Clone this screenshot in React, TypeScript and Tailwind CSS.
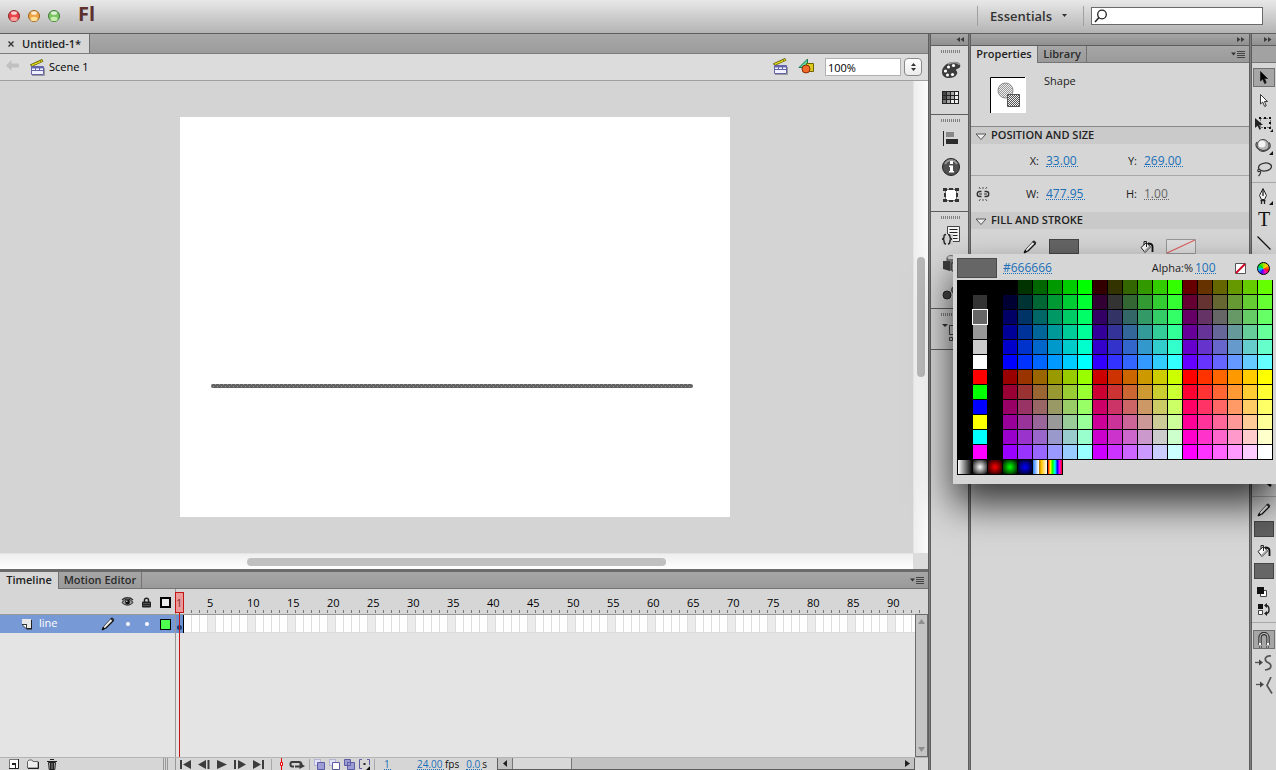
import { useState } from "react";
import type { ReactNode } from "react";

const HEX = ["00", "33", "66", "99", "CC", "FF"];
const LEFT_COLUMN = [
    "#000000",
    "#333333",
    "#666666",
    "#999999",
    "#CCCCCC",
    "#FFFFFF",
    "#FF0000",
    "#00FF00",
    "#0000FF",
    "#FFFF00",
    "#00FFFF",
    "#FF00FF",
];

// 12 rows x 21 columns: black, the basic column, black, then the web-safe cube
const SWATCHES = LEFT_COLUMN.flatMap((basic, row) => {
    const cube = Array.from({ length: 18 }, (_, col) => {
        const red = HEX[Math.floor(col / 6) + (row > 5 ? 3 : 0)];
        return `#${red}${HEX[col % 6]}${HEX[row % 6]}`;
    });
    return ["#000000", basic, "#000000", ...cube];
});

const GRADIENTS = [
    "linear-gradient(90deg,#fff,#000)",
    "radial-gradient(circle,#fff,#000)",
    "radial-gradient(circle,#f00,#000)",
    "radial-gradient(circle,#0f0,#000)",
    "radial-gradient(circle,#00f,#000)",
    "linear-gradient(90deg,#2a7fff,#fff 40%,#a86a00 41%,#ffc400 60%,#fff)",
    "linear-gradient(90deg,#f00,#ff0,#0f0,#0ff,#00f,#f0f,#f00)",
];

const FRAMES = Array.from({ length: 93 }, (_, i) => i + 1);
const LABELS = Array.from({ length: 18 }, (_, i) => (i + 1) * 5);

type IconProps = { w: number; h: number; children: ReactNode; className?: string };

const Icon = ({ w, h, children, className }: IconProps) => (
    <svg
        width={w}
        height={h}
        viewBox={`0 0 ${w} ${h}`}
        fill="none"
        aria-hidden="true"
        className={`shrink-0 ${className ?? ""}`}
    >
        {children}
    </svg>
);

const Clapper = () => (
    <Icon w={15} h={17}>
        <path d="M0 5.500 12 0l1.500 2.500L1.500 8z" fill="#5c5800" />
        <path d="M1.200 5.800 12 1l.7 1.300L2 7z" fill="#e8e020" />
        <path d="M4 4.700l1 1M7 3.400l1 1M10 2l1 1" stroke="#8a8400" />
        <path d="M1.500 7.500h12v8h-12z" fill="#f0f0ff" stroke="#6464a8" />
        <path d="M1.500 8.500h12M1.500 11.500h12" stroke="#6464a8" />
        <path d="M2 9.500h11" stroke="#b4b4e0" />
        <path d="M5.500 8v4M9.500 8v4" stroke="#6464a8" />
        <path d="M2 16.500h12.500V9" stroke="#888" strokeWidth=".8" />
    </Icon>
);

const Pencil = () => (
    <Icon w={14} h={14}>
        <path d="M1.500 12.500 3 9l7-7.500 2.500 2L5 11z" fill="#eee" stroke="#333" strokeWidth=".8" />
        <path d="M1 13l1.200-2.800 1.700 1.500z" fill="#111" stroke="#111" />
        <path d="M4.500 11.500 12.500 3.500" stroke="#111" strokeWidth="1.300" />
        <path d="M9.500 1.800 11 .8l2 1.700-1 1.500z" fill="#333" stroke="#111" strokeWidth=".6" />
    </Icon>
);

const Bucket = () => (
    <Icon w={14} h={14}>
        <path d="M1 7.500 6.500 2.500 10.500 7 5 12.500z" fill="#fafafa" stroke="#222" />
        <path d="M4.500 11.500 9.500 6.500" stroke="#aaa" strokeWidth="1.500" />
        <path d="M4 5V1.500h2.500V7" stroke="#222" />
        <path d="M8 3.500c3 0 4.500 1.500 4.500 3v5.500" stroke="#111" strokeWidth="1.800" />
    </Icon>
);

const PanelMenu = () => (
    <Icon w={14} h={9}>
        <path d="M0 2.500h5L2.500 5.500z" fill="#333" />
        <path d="M6 1.500h8M6 3.500h8M6 5.500h8M6 7.500h8" stroke="#444" />
    </Icon>
);

const DoubleArrow = ({ left }: { left?: boolean }) => (
    <Icon w={8} h={7} className={left ? "rotate-180" : ""}>
        <path d="M0 1l3.500 2.500L0 6zM4 1l3.500 2.500L4 6z" fill="#3a3a3a" />
    </Icon>
);

const Grip = () => (
    <Icon w={19} h={3} className="mx-auto">
        <path d="M.5 0v3M2.500 0v3M4.500 0v3M6.500 0v3M8.500 0v3M10.500 0v3M12.500 0v3M14.500 0v3M16.500 0v3M18.500 0v3" stroke="#808080" />
    </Icon>
);

const TrafficLight = ({ label, rim, mid, glow }: { label: string; rim: string; mid: string; glow: string }) => (
    <button type="button" aria-label={label} className="size-3">
        <Icon w={12} h={12}>
            <circle cx="6" cy="6" r="5.500" fill={mid} stroke={rim} />
            <ellipse cx="6" cy="9" rx="3.500" ry="2.200" fill={glow} opacity=".85" />
            <ellipse cx="6" cy="3" rx="3" ry="1.800" fill="#fff" opacity=".75" />
        </Icon>
    </button>
);

const HotText = ({
    id,
    label,
    value,
    className,
}: {
    id: string;
    label?: string;
    value: string;
    className: string;
}) => (
    <input
        id={id}
        aria-label={label}
        defaultValue={value}
        className={`h-3 border-b border-dotted bg-transparent p-0 leading-3 outline-none ${className}`}
    />
);

const Header = () => (
    <header className="flex h-[34px] shrink-0 items-center border-b border-[#5e5e5e] bg-linear-to-b from-[#e8e8e8] to-[#b4b4b4] pb-px pl-2 pr-[13px]">
        <div className="flex gap-2">
            <TrafficLight label="Close" rim="#8c2a2a" mid="#e8434a" glow="#ffb0a8" />
            <TrafficLight label="Minimize" rim="#9a6420" mid="#f0a345" glow="#ffe9a0" />
            <TrafficLight label="Zoom" rim="#417a35" mid="#7cc565" glow="#d0f5b8" />
        </div>
        <h1 className="ml-[18px] pb-1 text-[20px] font-bold leading-6 text-[#5c302d]">Fl</h1>
        <div className="ml-auto flex h-5 items-center border-x border-[#a0a0a0] px-3">
            <button type="button" className="flex items-center gap-[10px] pb-px text-[13px] font-semibold leading-4 text-[#333]">
                Essentials
                <Icon w={5} h={3} className="mr-1">
                    <path d="M0 0h5L2.500 3z" fill="#333" />
                </Icon>
            </button>
        </div>
        <label className="ml-[7px] flex h-[18px] w-[172px] items-center border border-[#6a6a6a] bg-white pl-[2px]">
            <Icon w={13} h={14}>
                <circle cx="8" cy="5.500" r="4.300" stroke="#222" strokeWidth="1.300" />
                <path d="M5 8.500 1 13" stroke="#222" strokeWidth="1.500" />
            </Icon>
            <input type="search" aria-label="Search" className="h-4 w-full min-w-0 outline-none" />
        </label>
    </header>
);

const DocumentArea = () => (
    <section className="flex min-h-0 flex-1 flex-col">
        <div className="flex h-5 shrink-0 border-b border-[#7c7c7c] bg-linear-to-b from-[#a9a9a9] to-[#9b9b9b]">
            <div className="flex w-[90px] items-center gap-2 border-r border-[#6e6e6e] bg-[#d6d6d6] pl-2 font-semibold text-[#222]">
                <button type="button" aria-label="Close document" className="shrink-0">
                    <Icon w={6} h={6}>
                        <path d="M.5 .5l5 5M5.500 .5l-5 5" stroke="#333" strokeWidth="1.400" />
                    </Icon>
                </button>
                <span>Untitled-1*</span>
            </div>
        </div>
        <div className="flex h-[27px] shrink-0 items-center border-b border-[#a0a0a0] bg-[#dcdcdc] pl-[6px] pr-[6px]">
            <button type="button" aria-label="Back">
                <Icon w={13} h={11} className="-mt-1">
                    <path d="M0 5.500 5.500 0v3.500H13v4H5.500V11z" fill="#c0c0c0" />
                </Icon>
            </button>
            <div className="ml-[11px] flex items-center gap-1 text-black">
                <Clapper />
                <span>Scene 1</span>
            </div>
            <div className="ml-auto flex items-center">
                <button type="button" aria-label="Edit scene" className="pb-[2px]">
                    <Clapper />
                </button>
                <button type="button" aria-label="Edit symbols" className="ml-[10px] pb-[3px]">
                    <Icon w={17} h={16}>
                        <path d="M1 9.500 9.500 1v8.500z" fill="#5fd6a0" stroke="#187a52" />
                        <path d="M8.500 5.500h7v8h-7z" fill="#dccb1c" stroke="#6e6500" />
                        <circle cx="8" cy="11" r="4" fill="#f26a2a" stroke="#8c2c08" />
                    </Icon>
                </button>
                <input
                    aria-label="Zoom level"
                    defaultValue="100%"
                    className="ml-[10px] h-[18px] w-[76px] border border-[#b0b0b0] bg-white pl-[2px] text-black outline-none"
                />
                <button
                    type="button"
                    aria-label="Zoom presets"
                    className="ml-[3px] flex h-[18px] w-[18px] items-center justify-center rounded border border-[#8a8a8a] bg-linear-to-b from-white to-[#ececec]"
                >
                    <Icon w={5} h={8}>
                        <path d="M0 3h5L2.500 0zM0 5h5L2.500 8z" fill="#333" />
                    </Icon>
                </button>
            </div>
        </div>
        <div className="flex min-h-0 flex-1">
            <div className="flex min-w-0 flex-1 items-center justify-center bg-[#d4d4d4] pr-[3px]">
                <div className="relative h-[400px] w-[550px] shrink-0 bg-white">
                    <svg width="482" height="4" className="absolute left-[31px] top-[267px]" role="img" aria-label="Line shape">
                        <defs>
                            <pattern id="dots" width="4" height="4" patternUnits="userSpaceOnUse">
                                <path d="M0 0h1v1H0zM2 2h1v1H2z" fill="#999" />
                            </pattern>
                        </defs>
                        <rect width="482" height="4" rx="2" fill="#626262" />
                        <rect width="482" height="4" rx="2" fill="url(#dots)" />
                    </svg>
                </div>
            </div>
            <div className="flex w-[15px] shrink-0 flex-col items-center justify-center border-l border-[#e4e4e4] bg-linear-to-r from-[#eee] to-[#fbfbfb]">
                <div className="h-[120px] w-2 rounded-full bg-[#b9b9b9]" />
            </div>
        </div>
        <div className="flex h-4 shrink-0">
            <div className="flex flex-1 items-center border-t border-[#e4e4e4] bg-linear-to-b from-[#eee] to-white pt-px">
                <div className="ml-[27%] h-2 w-[46%] rounded-full bg-[#c0c0c0]" />
            </div>
            <div className="w-[15px] bg-[#dcdcdc]" />
        </div>
    </section>
);

const Ruler = () => (
    <div className="flex h-[26px] shrink-0 border-b border-[#989898] bg-[#d6d6d6]">
        <div className="flex w-[175px] shrink-0 items-center justify-end pt-px">
            <button type="button" aria-label="Show or hide all layers" className="flex w-[19px] justify-center">
                <Icon w={13} h={10}>
                    <path d="M1 5.500c3-4.500 8-4.500 11 0-3 3.500-8 3.500-11 0z" fill="#999" stroke="#222" />
                    <circle cx="6.500" cy="5" r="2.400" fill="#111" />
                    <path d="M1 3c3-3 8-3 11 0" stroke="#333" strokeWidth="1.300" />
                    <circle cx="5.800" cy="4.200" r=".7" fill="#fff" />
                </Icon>
            </button>
            <button type="button" aria-label="Lock or unlock all layers" className="flex w-[19px] justify-center">
                <Icon w={9} h={11}>
                    <path d="M2.500 5V3c0-2.500 4-2.500 4 0v2" stroke="#222" strokeWidth="1.500" />
                    <rect y="4.500" width="9" height="6" rx="1" fill="#222" />
                    <path d="M1 6.500h7M1 8.500h7" stroke="#666" strokeWidth=".7" />
                </Icon>
            </button>
            <button type="button" aria-label="Show all layers as outlines" className="flex w-[19px] justify-center">
                <span className="size-[11px] border-2 border-black bg-[#eee]" />
            </button>
        </div>
        <div className="flex min-w-0 flex-1 flex-col justify-end overflow-hidden border-l border-[#989898] pb-px text-black">
            <div className="flex leading-[14px]">
                <span className="w-[31px] shrink-0">1</span>
                {LABELS.map((n) => (
                    <span key={n} className="w-10 shrink-0">
                        {n}
                    </span>
                ))}
            </div>
            <div className="flex">
                {FRAMES.map((n) => (
                    <span key={n} className="h-[3px] w-2 shrink-0 border-r border-[#777]" />
                ))}
            </div>
        </div>
    </div>
);

const LayerRow = () => (
    <div className="flex h-[18px] shrink-0">
        <div className="flex w-[175px] shrink-0 items-center bg-[#7799d6] pl-[22px] text-white">
            <Icon w={11} h={11}>
                <path d="M0 1h10v9.500H4.500V6H0z" fill="#222" />
                <path d="M0 0h9v9H5V5H0z" fill="#e8e8e8" />
                <path d="M0 5.500h4.500V10z" fill="#fff" stroke="#222" strokeWidth=".8" />
            </Icon>
            <span className="ml-[6px] pb-[2px]">line</span>
            <div className="ml-auto flex items-center">
                <Pencil />
                <button type="button" aria-label="Layer visible" className="ml-[3px] flex w-[19px] justify-center">
                    <span className="size-1 rounded-full bg-white" />
                </button>
                <button type="button" aria-label="Layer unlocked" className="flex w-[19px] justify-center">
                    <span className="size-1 rounded-full bg-white" />
                </button>
                <button type="button" aria-label="Layer outline colour" className="flex w-[19px] justify-center">
                    <span className="size-[11px] border border-black bg-[#4fff4f]" />
                </button>
            </div>
        </div>
        <div className="flex min-w-0 flex-1 overflow-hidden border-l border-[#989898]">
            {FRAMES.map((n) =>
                n === 1 ? (
                    <span key={n} className="flex w-2 shrink-0 items-end justify-center border-r border-black bg-[#6d92d4] pb-[3px]">
                        <span className="size-[5px] rounded-full bg-[#173d7a]" />
                    </span>
                ) : (
                    <span
                        key={n}
                        className={`w-2 shrink-0 border-b border-r border-[#dcdcdc] ${n % 5 === 0 ? "bg-[#ebebeb]" : "bg-white"}`}
                    />
                ),
            )}
        </div>
    </div>
);

const Separator = () => <span className="h-[11px] w-px shrink-0 bg-[#a8a8a8]" />;

const TimelineFooter = () => (
    <div className="flex h-[13px] shrink-0 items-center border-t border-[#b4b4b4] bg-[#d6d6d6]">
        <div className="flex w-[175px] shrink-0 items-center gap-2 pl-[9px]">
            <button type="button" aria-label="New layer">
                <Icon w={10} h={10}>
                    <path d="M.5 .5h9v9h-9z" fill="#fff" stroke="#777" />
                    <path d="M9.500 0v9.500H0" stroke="#222" />
                    <path d="M3 4h4v5H6V6H3z" fill="#222" />
                </Icon>
            </button>
            <button type="button" aria-label="New folder">
                <Icon w={12} h={10}>
                    <path d="M.5 2.500 2 1h3l1 1.500h5v6.500H.5z" fill="#eee" stroke="#666" />
                    <path d="M11.500 3v6.500H1" stroke="#222" />
                </Icon>
            </button>
            <button type="button" aria-label="Delete layer">
                <Icon w={10} h={12}>
                    <path d="M1.500 4.500h7l-.7 7H2.200z" fill="#ccc" stroke="#222" />
                    <path d="M0 3.500h10M3 1.500h4M3.500 5v6M5 5v6M6.500 5v6" stroke="#222" strokeWidth="1.200" />
                </Icon>
            </button>
            <Icon w={6} h={12} className="ml-auto mr-[6px]">
                <path d="M.5 0v12M2.500 0v12M4.500 0v12" stroke="#999" />
            </Icon>
        </div>
        <div className="flex h-full shrink-0 items-center border-l border-[#989898] pl-1">
            <div className="flex items-center gap-[7px]">
                <button type="button" aria-label="First frame">
                    <Icon w={11} h={9}>
                        <path d="M0 0h2v9H0zM11 0v9L3 4.500z" fill="#3c3c3c" />
                    </Icon>
                </button>
                <button type="button" aria-label="Step back">
                    <Icon w={12} h={9}>
                        <path d="M8 0v9L0 4.500zM9.500 0h2v9h-2z" fill="#3c3c3c" />
                    </Icon>
                </button>
                <button type="button" aria-label="Play">
                    <Icon w={10} h={9}>
                        <path d="M0 0v9l10-4.500z" fill="#3c3c3c" />
                    </Icon>
                </button>
                <button type="button" aria-label="Step forward">
                    <Icon w={12} h={9}>
                        <path d="M0 0h2v9H0zM4 0v9l8-4.500z" fill="#3c3c3c" />
                    </Icon>
                </button>
                <button type="button" aria-label="Last frame">
                    <Icon w={11} h={9}>
                        <path d="M0 0v9l8-4.500zM9 0h2v9H9z" fill="#3c3c3c" />
                    </Icon>
                </button>
                <Separator />
            </div>
            <button type="button" aria-label="Center frame" className="ml-2">
                <Icon w={3} h={12}>
                    <path d="M1.500 0v12" stroke="#e00" />
                    <path d="M.5 4.500h2v3h-2z" fill="#fff" stroke="#e00" />
                </Icon>
            </button>
            <button type="button" aria-label="Loop" className="ml-[6px]">
                <Icon w={16} h={9}>
                    <path d="M5 6.500H3C1 6.500 1 2 3 2h7c2 0 2.500 1 2.500 3" stroke="#3c3c3c" strokeWidth="2" />
                    <path d="M6 6.500h5" stroke="#3c3c3c" strokeWidth="2" />
                    <path d="M10.500 3v6l5.500-3z" fill="#3c3c3c" />
                </Icon>
            </button>
            <span className="ml-1 flex items-center gap-1">
                <Separator />
                <button type="button" aria-label="Onion skin">
                    <Icon w={11} h={11}>
                        <path d="M.5 .5h6v6h-6z" fill="#e4e4f8" stroke="#8c8cc8" strokeDasharray="1 1" />
                        <path d="M3.500 3.500h7v7h-7z" fill="#9c9cd4" stroke="#5c5ca4" />
                    </Icon>
                </button>
                <button type="button" aria-label="Onion skin outlines">
                    <Icon w={11} h={11}>
                        <path d="M.5 .5h6v6h-6z" fill="#e4e4f8" stroke="#8c8cc8" strokeDasharray="1 1" />
                        <path d="M3.500 3.500h7v7h-7z" fill="#fff" stroke="#5c5ca4" />
                    </Icon>
                </button>
                <button type="button" aria-label="Edit multiple frames">
                    <Icon w={11} h={11}>
                        <path d="M.5 .5h6v6h-6zM3.500 3.500h7v7h-7z" fill="#9c9cd4" stroke="#5c5ca4" />
                    </Icon>
                </button>
                <button type="button" aria-label="Modify markers">
                    <Icon w={11} h={11}>
                        <path d="M3 .5H.5v9H3M8 .5h2.500V6" stroke="#5c5ca4" />
                        <path d="M4.500 4h2v2h-2z" fill="#222" />
                        <path d="M11 7v4H7z" fill="#111" />
                    </Icon>
                </button>
                <Separator />
            </span>
            <HotText id="frame" label="Frame" value="1" className="ml-[9px] w-[7px] border-[#1a6fb8] text-[10px] text-[#1a6fb8]" />
            <HotText id="fps" value="24.00" className="ml-[26px] w-[27px] border-[#1a6fb8] text-[10px] text-[#1a6fb8]" />
            <label htmlFor="fps" className="ml-px text-[10px] leading-3 text-[#111]">
                fps
            </label>
            <HotText id="elapsed" value="0.0" className="ml-[7px] w-4 border-[#1a6fb8] text-[10px] text-[#1a6fb8]" />
            <label htmlFor="elapsed" className="text-[10px] leading-3 text-[#111]">
                s
            </label>
        </div>
        <div className="ml-[10px] flex h-full min-w-0 flex-1 border border-t-0 border-[#5e5e5e] bg-[#c2c2c2]">
            <button type="button" aria-label="Scroll left" className="flex w-[15px] shrink-0 items-center justify-center border-r border-[#777]">
                <Icon w={4} h={7}>
                    <path d="M4 0v7L0 3.500z" fill="#222" />
                </Icon>
            </button>
            <div className="w-[59px] shrink-0 border-r border-[#777] bg-[#d8d8d8]" />
            <button type="button" aria-label="Scroll right" className="ml-auto mr-1 flex items-center">
                <Icon w={5} h={7}>
                    <path d="M0 0v7l5-3.500z" fill="#222" />
                </Icon>
            </button>
        </div>
        <div className="w-[13px] shrink-0" />
    </div>
);

const Timeline = () => (
    <section className="flex h-[201px] shrink-0 flex-col border-t-[3px] border-[#6b6b6b]">
        <div className="flex h-[17px] shrink-0 border-b border-[#747474] bg-linear-to-b from-[#a6a6a6] to-[#9a9a9a] font-semibold text-[#222]">
            <button type="button" className="-mb-px w-[59px] border-r border-[#747474] bg-[#d6d6d6] pb-[2px]">
                Timeline
            </button>
            <button type="button" className="w-[83px] border-r border-[#747474] pb-px text-[#2b2b2b]">
                Motion Editor
            </button>
            <button type="button" aria-label="Timeline panel menu" className="ml-auto mr-1">
                <PanelMenu />
            </button>
        </div>
        <div className="relative flex min-h-0 flex-1 flex-col">
            <Ruler />
            <div className="flex min-h-0 flex-1">
                <div className="flex min-w-0 flex-1 flex-col">
                    <LayerRow />
                    <div className="flex flex-1 bg-[#e4e4e4]">
                        <div className="w-[175px]" />
                        <div className="flex-1 border-l border-[#989898]" />
                    </div>
                </div>
                <div className="-mt-px flex w-[13px] shrink-0 flex-col items-center justify-between border border-[#6b6b6b] bg-[#c4c4c4] py-1">
                    <Icon w={7} h={5}>
                        <path d="M0 5h7L3.500 0z" fill="#8e8e8e" />
                    </Icon>
                    <Icon w={7} h={5}>
                        <path d="M0 0h7L3.500 5z" fill="#8e8e8e" />
                    </Icon>
                </div>
            </div>
            <div className="absolute bottom-0 left-[175px] top-[3px] flex w-[9px] flex-col items-center">
                <div className="h-[21px] w-full border border-[#c41414] bg-[#ff5a5a]/50" />
                <div className="w-px flex-1 bg-[#c41414]" />
            </div>
        </div>
        <TimelineFooter />
    </section>
);

const IconDock = () => (
    <aside className="flex w-[37px] shrink-0 flex-col">
        <div className="flex h-3 shrink-0 items-center justify-end border-b border-[#5e5e5e] bg-linear-to-b from-[#a6a6a6] to-[#909090] pr-1">
            <DoubleArrow left />
        </div>
        <div className="flex h-[69px] shrink-0 flex-col items-center border-b border-[#5e5e5e] pl-[2px] pt-1">
            <Grip />
            <button type="button" aria-label="Color" className="mt-2">
                <Icon w={20} h={18}>
                    <path d="M1 11C1 5 7 1 13 1c5 0 7 2 6 5-1 2-4 1.500-4 3 0 1 2 1.500 1 4-1.500 3-5 4-8 4-4 0-7-2-7-6z" fill="#3c3c3c" />
                    <path d="M7 3c5-2.500 10-2 11.500 1" stroke="#999" strokeWidth="1.500" />
                    <circle cx="4.500" cy="10" r="1.600" fill="#fff" />
                    <circle cx="7.500" cy="6" r="1.600" fill="#fff" />
                    <circle cx="12.500" cy="4.500" r="1.600" fill="#fff" />
                    <circle cx="6.500" cy="14" r="1.500" fill="#fff" />
                    <circle cx="11.500" cy="13.500" r="1.600" fill="#fff" />
                </Icon>
            </button>
            <button type="button" aria-label="Swatches" className="mt-3">
                <Icon w={17} h={13}>
                    <path d="M0 0h17v13H0z" fill="#222" />
                    <path d="M1 1h3v3H1zM1 5h3v3H1z" fill="#444" />
                    <path d="M5 1h3v3H5zM5 5h3v3H5zM1 9h3v3H1z" fill="#777" />
                    <path d="M9 1h3v3H9zM9 5h3v3H9zM5 9h3v3H5z" fill="#aaa" />
                    <path d="M13 1h3v3h-3zM13 5h3v3h-3zM9 9h3v3H9zM13 9h3v3h-3z" fill="#eee" />
                </Icon>
            </button>
        </div>
        <div className="flex h-[97px] shrink-0 flex-col items-center border-b border-[#5e5e5e] pl-[2px] pt-1">
            <Grip />
            <button type="button" aria-label="Align" className="mt-[9px]">
                <Icon w={15} h={15}>
                    <path d="M.5 0v15" stroke="#222" />
                    <path d="M3 1h8v5H3z" fill="#888" />
                    <path d="M3 8h12v5H3z" fill="#2c2c2c" />
                </Icon>
            </button>
            <button type="button" aria-label="Info" className="mt-3">
                <Icon w={18} h={18}>
                    <circle cx="9" cy="9" r="8.500" fill="#505050" stroke="#222" />
                    <path d="M3 6c3-5 9-5 12 0" stroke="#999" strokeWidth="2" />
                    <path d="M8 3h3v3H8zM7 7.500h4V13h1v1.500H7V13h1V9H7z" fill="#fff" />
                </Icon>
            </button>
            <button type="button" aria-label="Transform" className="mt-[11px]">
                <Icon w={16} h={16}>
                    <path d="M2.500 2.500h11v11h-11z" fill="#fff" stroke="#777" />
                    <path d="M0 1h4v3H0zM6 1h4v2H6zM12 1h4v3h-4zM1 6h2v4H1zM13 6h2v4h-2zM0 12h4v3H0zM6 13h4v2H6zM12 12h4v3h-4z" fill="#333" />
                </Icon>
            </button>
        </div>
        <div className="flex h-[97px] shrink-0 flex-col items-center border-b border-[#5e5e5e] pl-[2px] pt-1">
            <Grip />
            <button type="button" aria-label="Code snippets" className="mt-[7px]">
                <Icon w={20} h={19}>
                    <path d="M6.500 .5h12v15h-12z" fill="#f4f4f4" stroke="#444" />
                    <path d="M8.500 3.500h8M8.500 6.500h8M8.500 9.500h8M12 12.500h4.500" stroke="#222" />
                    <path d="M0 8h12v11H0z" fill="#d0d0d0" />
                    <path d="M5 8.500c-2 0-2 1-2 2.500 0 1.500-.5 2-2 2 1.500 0 2 .5 2 2 0 1.500 0 3 2 3M7 8.500c2 0 2 1 2 2.500 0 1.500.5 2 2 2-1.500 0-2 .5-2 2 0 1.500 0 3-2 3" stroke="#222" strokeWidth="1.400" />
                </Icon>
            </button>
            <button type="button" aria-label="Components" className="mt-[10px]">
                <Icon w={18} h={17}>
                    <path d="M5 3c0-3 8-3 8 0v5H5z" fill="#777" stroke="#555" />
                    <ellipse cx="9" cy="2.500" rx="3.500" ry="1.500" fill="#ccc" />
                    <path d="M1 6h7v10l-7-2z" fill="#3c3c3c" />
                    <path d="M8 8l4-2v8l-4 2z" fill="#666" />
                    <path d="M10 8h7v8h-7z" fill="#ddd" stroke="#333" />
                </Icon>
            </button>
            <button type="button" aria-label="Motion presets" className="mt-[13px]">
                <Icon w={18} h={15}>
                    <circle cx="5" cy="10" r="4" fill="#444" stroke="#222" />
                    <circle cx="13" cy="5" r="3.500" fill="#777" stroke="#444" />
                </Icon>
            </button>
        </div>
        <div className="flex h-[41px] shrink-0 flex-col items-center border-b border-[#5e5e5e] pl-[2px] pt-1">
            <Grip />
            <button type="button" aria-label="Project" className="mt-2">
                <Icon w={18} h={18}>
                    <path d="M0 0h6L3 3z" fill="#333" />
                    <path d="M7.500 1.500h9v9h-9zM7.500 13.500h3v3h-3zM13.500 13.500h3v3h-3z" stroke="#444" />
                </Icon>
            </button>
        </div>
    </aside>
);

const SectionTitle = ({ children }: { children: ReactNode }) => (
    <button type="button" className="flex h-[17px] w-full shrink-0 items-center gap-1 bg-[#cacaca] pl-1 text-left font-semibold text-[#222]">
        <Icon w={12} h={8} className="mt-[3px]">
            <path d="M1 1h10L6 6.500z" fill="#eee" stroke="#555" />
        </Icon>
        <h2 className="pb-[2px]">{children}</h2>
    </button>
);

const PropertiesPanel = () => (
    <aside className="flex w-[278px] shrink-0 flex-col">
        <div className="flex h-3 shrink-0 items-center justify-end border-b border-[#5e5e5e] bg-linear-to-b from-[#a6a6a6] to-[#909090] pr-1">
            <DoubleArrow />
        </div>
        <div className="flex h-[17px] shrink-0 border-b border-[#747474] bg-linear-to-b from-[#a6a6a6] to-[#9a9a9a] font-semibold text-[#222]">
            <button type="button" className="-mb-px w-[67px] border-r border-[#747474] bg-[#d6d6d6] pb-[2px]">
                Properties
            </button>
            <button type="button" className="w-[49px] border-r border-[#747474] pb-px text-[#2b2b2b]">
                Library
            </button>
            <button type="button" aria-label="Properties panel menu" className="ml-auto mr-1">
                <PanelMenu />
            </button>
        </div>
        <div className="flex h-16 shrink-0 gap-[18px] border-b border-[#888] pl-[19px] pt-[10px] text-[#1c1c1c]">
            <Icon w={36} h={40}>
                <defs>
                    <pattern id="check" width="2" height="2" patternUnits="userSpaceOnUse">
                        <path d="M0 0h1v1H0zM1 1h1v1H1z" fill="#555" />
                    </pattern>
                    <pattern id="check-light" width="2" height="2" patternUnits="userSpaceOnUse">
                        <path d="M0 0h1v1H0zM1 1h1v1H1z" fill="#999" />
                    </pattern>
                </defs>
                <path d="M0 4h36v36H0z" fill="#fff" />
                <path d="M.5 40V4.500H35" stroke="#000" />
                <circle cx="15.500" cy="17.500" r="7.500" fill="#eee" />
                <circle cx="15.500" cy="17.500" r="7.500" fill="url(#check-light)" stroke="#888" />
                <path d="M17.500 21.500h12v12h-12z" fill="#eee" />
                <path d="M17.500 21.500h12v12h-12z" fill="url(#check)" stroke="#555" />
            </Icon>
            <span className="h-4 leading-4">Shape</span>
        </div>
        <SectionTitle>POSITION AND SIZE</SectionTitle>
        <div className="flex h-8 shrink-0 items-center border-b border-[#a8a8a8] pt-[2px] text-[#1c1c1c]">
            <label htmlFor="pos-x" className="w-[68px] text-right">
                X:
            </label>
            <HotText id="pos-x" value="33.00" className="ml-[7px] w-8 border-[#1a6fb8] text-[12px] text-[#1a6fb8]" />
            <label htmlFor="pos-y" className="ml-5 w-[39px] text-right">
                Y:
            </label>
            <HotText id="pos-y" value="269.00" className="ml-[7px] w-[39px] border-[#1a6fb8] text-[12px] text-[#1a6fb8]" />
        </div>
        <div className="flex h-9 shrink-0 items-center pb-px pl-[5px] text-[#1c1c1c]">
            <button type="button" aria-label="Lock width and height values together">
                <Icon w={14} h={14}>
                    <path d="M5.500 4.500H3.500c-3 0-3 5 0 5h2M8.500 4.500h2c3 0 3 5 0 5h-2" stroke="#333" strokeWidth="1.400" />
                    <path d="M3 7h3M8 7h3" stroke="#333" />
                    <path d="M3 0l1.500 2M7 0v2M11 0 9.500 2M3 14l1.500-2M7 14v-2M11 14l-1.500-2" stroke="#555" />
                </Icon>
            </button>
            <label htmlFor="size-w" className="w-[49px] text-right">
                W:
            </label>
            <HotText id="size-w" value="477.95" className="ml-[7px] w-[39px] border-[#1a6fb8] text-[12px] text-[#1a6fb8]" />
            <label htmlFor="size-h" className="ml-[13px] w-[39px] text-right">
                H:
            </label>
            <HotText id="size-h" value="1.00" className="ml-[7px] w-[25px] border-[#666] text-[12px] text-[#666]" />
        </div>
        <SectionTitle>FILL AND STROKE</SectionTitle>
        <div className="flex h-9 shrink-0 items-center pb-px pl-[52px]">
            <Pencil />
            <button type="button" aria-label="Stroke color" className="ml-3 h-[15px] w-[30px] border border-[#444] bg-[#666]" />
            <span className="ml-[61px] flex">
                <Bucket />
            </span>
            <button type="button" aria-label="Fill color" className="ml-3">
                <Icon w={30} h={15}>
                    <path d="M.5 .5h29v14H.5z" fill="#e0e0e0" stroke="#999" />
                    <path d="M1 14 29 1" stroke="#e06060" strokeWidth="1.200" />
                </Icon>
            </button>
        </div>
    </aside>
);

const ToolButton = ({ label, active, children }: { label: string; active?: boolean; children: ReactNode }) => (
    <button
        type="button"
        aria-label={label}
        className={`mx-px my-[2px] flex h-[19px] w-[22px] shrink-0 items-center justify-center ${active ? "border border-[#707070] bg-[#a6a6a6]" : ""}`}
    >
        {children}
    </button>
);

const Arrow = ({ fill }: { fill: string }) => (
    <Icon w={10} h={15}>
        <path d="M1.500 1.500v9.500l2.200-2 2 4.500 1.500-.7L5.500 8.500h3z" fill={fill} stroke="#222" strokeWidth=".9" />
    </Icon>
);

const ToolsPanel = () => (
    <aside className="flex w-6 shrink-0 flex-col">
        <div className="flex h-3 shrink-0 items-center justify-end border-b border-[#5e5e5e] bg-linear-to-b from-[#a6a6a6] to-[#909090] pr-1">
            <DoubleArrow />
        </div>
        <div className="h-[17px] shrink-0 border-b border-[#747474] bg-[#a2a2a2]" />
        <div className="flex h-[120px] shrink-0 flex-col border-b border-[#a8a8a8] pt-[3px]">
            <ToolButton label="Selection tool" active>
                <Arrow fill="#000" />
            </ToolButton>
            <ToolButton label="Subselection tool">
                <Arrow fill="#fff" />
            </ToolButton>
            <ToolButton label="Free transform tool">
                <Icon w={18} h={16}>
                    <path d="M5.500 2.500h10v9h-10z" stroke="#111" strokeDasharray="1 2" />
                    <path d="M0 2v10l2.500-2.200 2 4 1.500-.7-1.700-4H8z" fill="#222" />
                    <path d="M4 1h2v2H4zM9 1h2v2H9zM14 1h2v2h-2zM14 6h2v2h-2zM14 11h2v2h-2zM9 11h2v2H9zM18 13v3h-3z" fill="#111" />
                </Icon>
            </ToolButton>
            <ToolButton label="3D rotation tool">
                <Icon w={18} h={17}>
                    <circle cx="8" cy="7.500" r="6" fill="#b4b4b4" stroke="#444" />
                    <circle cx="7" cy="6" r="3.500" fill="#f4f4f4" />
                    <path d="M2 4c-3 4 1 8 6 8.500 6 .5 9-4 6-8" stroke="#444" strokeWidth="1.200" />
                    <path d="M18 13v4h-4z" fill="#111" />
                </Icon>
            </ToolButton>
            <ToolButton label="Lasso tool">
                <Icon w={16} h={15}>
                    <ellipse cx="9" cy="5" rx="6.500" ry="4" stroke="#333" strokeWidth="1.300" transform="rotate(-8 9 5)" />
                    <path d="M3 7c-2 1-1.500 3 .5 2.500s1 2.500-1 4.500" stroke="#333" strokeWidth="1.200" />
                </Icon>
            </ToolButton>
        </div>
        <div className="flex h-[314px] shrink-0 flex-col border-b border-[#a8a8a8] pt-[2px]">
            <ToolButton label="Pen tool">
                <Icon w={18} h={17}>
                    <path d="M8 .5 4.500 7.500l2 4h3l2-4z" fill="#f4f4f4" stroke="#222" />
                    <path d="M8 1v7M5.500 12.500h5M6.500 12.500V16M9.500 12.500V16" stroke="#222" strokeWidth="1.300" />
                    <path d="M18 13v4h-4z" fill="#111" />
                </Icon>
            </ToolButton>
            <ToolButton label="Text tool">
                <span className="pb-[2px] text-[20px] leading-5 text-[#111] [font-family:'Liberation_Serif',serif]">T</span>
            </ToolButton>
            <ToolButton label="Line tool">
                <Icon w={14} h={14}>
                    <path d="M.5 .5l13 13" stroke="#111" strokeWidth="1.300" />
                </Icon>
            </ToolButton>
            <div className="mt-auto flex justify-end pr-1">
                <Icon w={14} h={18}>
                    <path d="M5 1l8 7" stroke="#111" strokeWidth="2.500" />
                </Icon>
            </div>
        </div>
        <div className="flex h-[126px] shrink-0 flex-col items-center border-b border-[#a8a8a8] pt-[6px]">
            <Pencil />
            <button type="button" aria-label="Tool stroke color" className="mt-1 h-4 w-5 shrink-0 border border-[#444] bg-[#606060]" />
            <div className="mt-[7px]">
                <Bucket />
            </div>
            <button type="button" aria-label="Tool fill color" className="mt-[5px] h-4 w-5 shrink-0 border border-[#444] bg-[#666]" />
            <button type="button" aria-label="Black and white" className="mr-1 mt-2 shrink-0">
                <Icon w={10} h={10}>
                    <path d="M3.500 3.500h6v6h-6z" fill="#fff" stroke="#444" />
                    <path d="M0 0h7v7H0z" fill="#111" />
                </Icon>
            </button>
            <button type="button" aria-label="Swap colors" className="mt-[6px] shrink-0">
                <Icon w={13} h={13}>
                    <path d="M0 1h5v5H0z" fill="#111" />
                    <path d="M.5 7.500h4v4h-4z" fill="#fff" stroke="#444" />
                    <path d="M8 2.500c4 0 4 8 0 8" stroke="#222" strokeWidth="1.400" />
                    <path d="M6 2.500 9 0v5zM6 10.500 9 8v5z" fill="#222" />
                </Icon>
            </button>
        </div>
        <div className="flex flex-col pt-[5px]">
            <ToolButton label="Snap to objects" active>
                <Icon w={12} h={16}>
                    <path d="M2 13V6c0-6 8-6 8 0v7" stroke="#333" strokeWidth="3.400" />
                    <path d="M2 13V6c0-6 8-6 8 0v7" stroke="#bbb" strokeWidth="1.200" />
                    <path d="M1 11h2v2H1zM9 11h2v2H9z" fill="#fff" />
                    <path d="M1 15h1M3 15h1M8 15h1M10 15h1" stroke="#111" />
                </Icon>
            </ToolButton>
            <ToolButton label="Smooth">
                <Icon w={18} h={16}>
                    <path d="M0 7.500h5" stroke="#555" strokeWidth="1.300" />
                    <path d="M4 4.500v6l4-3z" fill="#444" />
                    <path d="M16 1c-6-1-7 4-4 6 5 2 6 7-2 8" stroke="#555" strokeWidth="1.700" />
                </Icon>
            </ToolButton>
            <ToolButton label="Straighten">
                <Icon w={18} h={17}>
                    <path d="M1 7.500h5" stroke="#555" strokeWidth="1.300" />
                    <path d="M5 4.500v6l4-3z" fill="#444" />
                    <path d="M16 0l-4 8.500 5 8" stroke="#555" strokeWidth="1.700" />
                </Icon>
            </ToolButton>
        </div>
    </aside>
);

const ColorPopup = () => {
    const [color, setColor] = useState("#666666");
    const selected = SWATCHES.indexOf(color, 1);

    return (
        <div
            role="dialog"
            aria-label="Color picker"
            className="absolute right-0 top-[254px] h-[230px] w-[323px] bg-[#d6d6d6] pl-1 pt-1 shadow-[0_20px_36px_rgba(0,0,0,0.75)]"
        >
            <div className="flex h-[22px] items-center pb-[2px] pr-[6px]">
                <span className="h-5 w-10 border border-[#4a4a4a]" style={{ backgroundColor: color }} />
                <HotText id="hex" label="Hex value" value="#666666" className="ml-[6px] w-[49px] border-[#1a6fb8] text-[12px] text-[#1a6fb8]" />
                <label htmlFor="alpha" className="ml-auto text-[#1c1c1c]">
                    Alpha:%
                </label>
                <HotText id="alpha" value="100" className="ml-[2px] w-[21px] border-[#1a6fb8] text-[12px] text-[#1a6fb8]" />
                <button type="button" aria-label="No color" className="ml-[19px]">
                    <Icon w={11} h={11}>
                        <path d="M.5 .5h10v10H.5z" fill="#fff" stroke="#555" />
                        <path d="M1 10 10 1" stroke="#d00020" strokeWidth="1.800" />
                    </Icon>
                </button>
                <button
                    type="button"
                    aria-label="System color picker"
                    className="ml-[11px] size-[13px] rounded-full border border-black bg-[conic-gradient(#a0e000,#ffd000,#ff2000,#ff00c0,#4000ff,#00c0ff,#00e000,#a0e000)]"
                />
            </div>
            <div className="grid w-[316px] grid-cols-[repeat(21,14px)] gap-px bg-black px-px pb-px">
                {SWATCHES.map((swatch, i) => (
                    <button
                        key={i}
                        type="button"
                        aria-label={swatch}
                        onClick={() => setColor(swatch)}
                        className={`h-[14px] ${i === selected ? "z-10 outline outline-white" : ""}`}
                        style={{ backgroundColor: swatch }}
                    />
                ))}
            </div>
            <div className="grid w-[106px] grid-cols-[repeat(7,14px)] gap-px bg-black px-px pb-px">
                {GRADIENTS.map((gradient, i) => (
                    <button
                        key={gradient}
                        type="button"
                        aria-label={`Gradient ${i + 1}`}
                        className="h-[14px]"
                        style={{ backgroundImage: gradient }}
                    />
                ))}
            </div>
        </div>
    );
};

const App = () => (
    <div className="relative flex h-screen w-full flex-col overflow-hidden bg-[#d6d6d6] text-[11px] leading-4 [font-family:'Open_Sans','Noto_Sans',sans-serif]">
        <Header />
        <div className="flex min-h-0 flex-1">
            <main className="flex min-w-0 flex-1 flex-col">
                <DocumentArea />
                <Timeline />
            </main>
            <div className="w-[3px] shrink-0 border-x border-[#5e5e5e] bg-[#7e7e7e]" />
            <IconDock />
            <div className="w-[3px] shrink-0 border-x border-[#5e5e5e] bg-[#7e7e7e]" />
            <PropertiesPanel />
            <div className="w-[3px] shrink-0 border-x border-[#5e5e5e] bg-[#7e7e7e]" />
            <ToolsPanel />
        </div>
        <ColorPopup />
    </div>
);

export default App;
